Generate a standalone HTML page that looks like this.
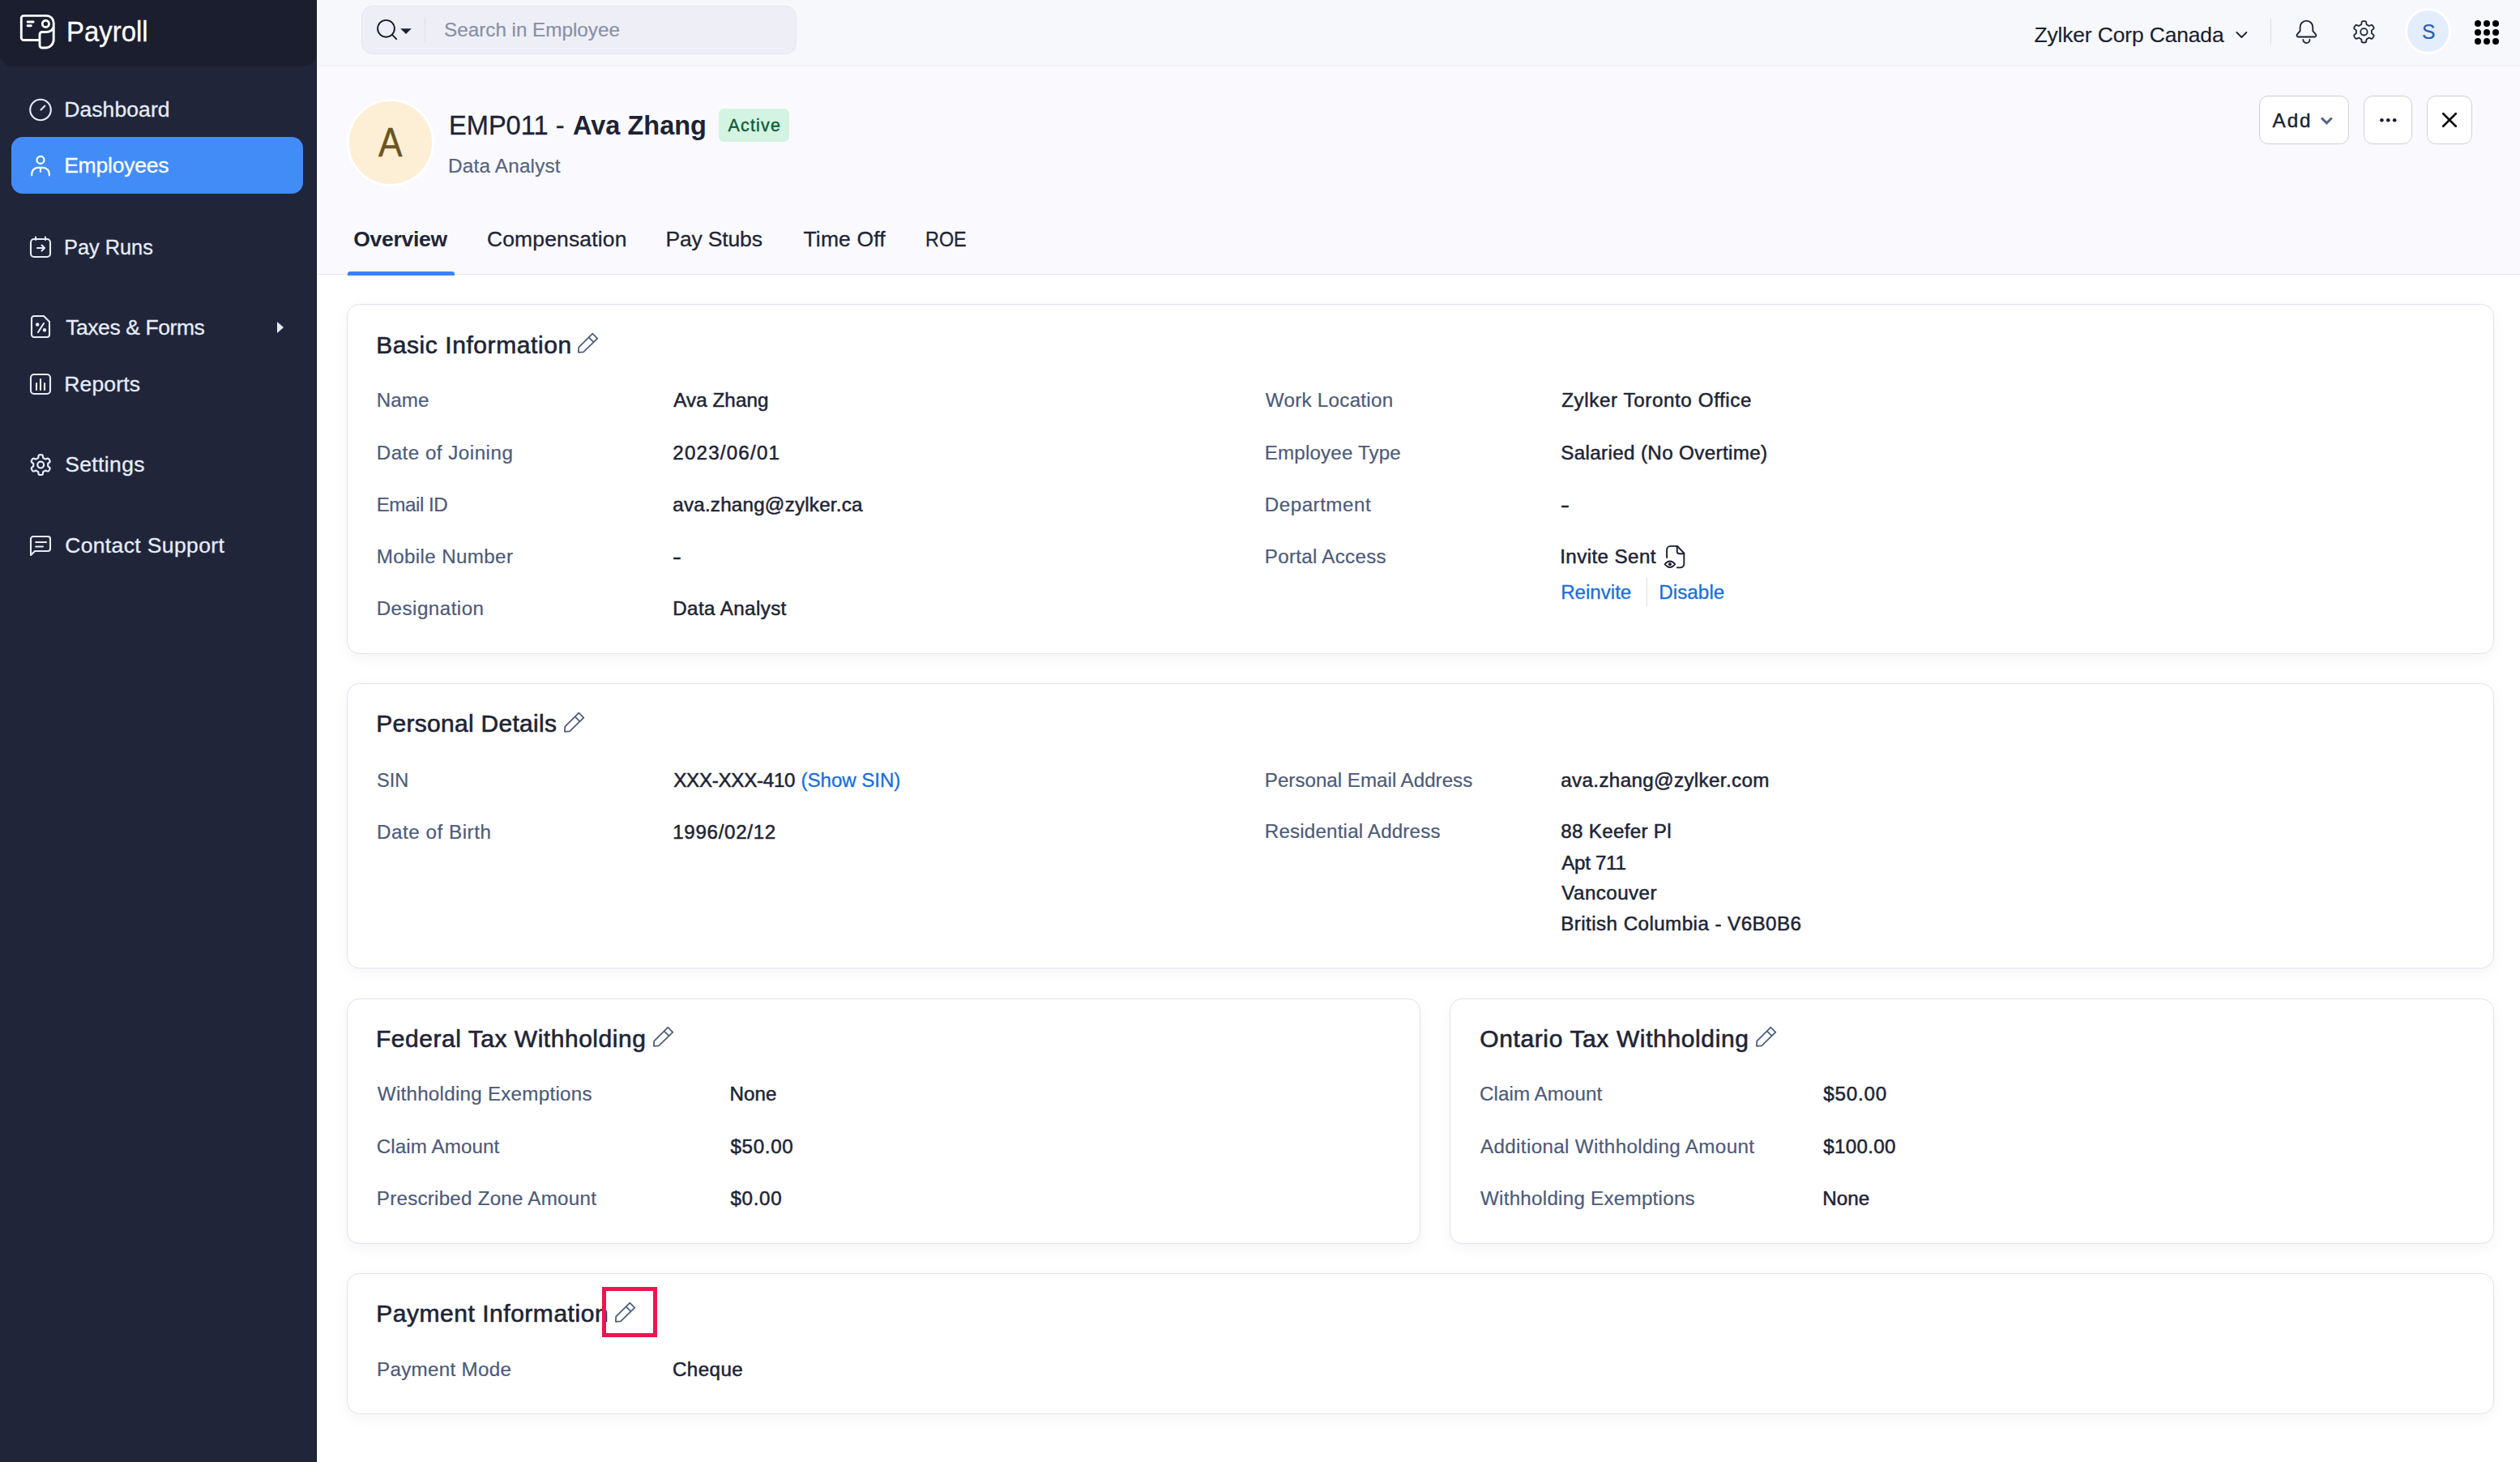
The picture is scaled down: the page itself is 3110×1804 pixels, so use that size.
<!DOCTYPE html>
<html><head><meta charset="utf-8"><title>Payroll - Employee</title>
<style>
html,body{margin:0;padding:0;width:3110px;height:1804px;overflow:hidden;background:#fafafd;}
body{position:relative;font-family:"Liberation Sans",sans-serif;}
.t{position:absolute;line-height:1;white-space:nowrap;}
.r{position:absolute;}
</style></head><body>
<div class="r" style="left:0px;top:0px;width:391px;height:1804px;background:#20253a;"></div>
<div class="r" style="left:390px;top:0px;width:1px;height:1804px;background:#131831;"></div>
<div class="r" style="left:0px;top:0px;width:390px;height:82px;background:#1a1e2f;border-radius:0 0 15px 15px;"></div>
<svg class="r" style="left:0px;top:0px" width="90" height="80" viewBox="0 0 90 80" fill="none" stroke="#fff" stroke-width="2.9" stroke-linecap="round" stroke-linejoin="round">
<path d="M49 49.5 H29.5 a3 3 0 0 1 -3.2 -3 V22.5 a3 3 0 0 1 3 -3.1 H57.5 a8.7 8.7 0 0 1 8.7 8.7 V49 a10 10 0 0 1 -10 10 H52 a3 3 0 0 1 -3 -3 V42.5 a3 3 0 0 1 3 -3 H57 Q64 39.5 66.2 33"/>
<path d="M34.1 27 H41.1 M34.1 31.8 H38.3"/><circle cx="56.4" cy="29.4" r="4.1"/></svg>
<div class="t" style="left:82.03px;top:21.65px;font-size:34.5px;color:#ffffff;transform:scaleX(0.9541);transform-origin:0 0;-webkit-text-stroke:0.3px #ffffff;">Payroll</div>
<div class="r" style="left:14px;top:169px;width:360px;height:70px;background:#428cf7;border-radius:14px;"></div>
<div class="t" style="left:79.15px;top:122.01px;font-size:26.5px;color:#e6ecf8;letter-spacing:0.100px;-webkit-text-stroke:0.3px #e6ecf8;">Dashboard</div>
<div class="t" style="left:79.15px;top:190.51px;font-size:26.5px;color:#ffffff;letter-spacing:-0.205px;-webkit-text-stroke:0.3px #ffffff;">Employees</div>
<div class="t" style="left:79.23px;top:291.51px;font-size:26.5px;color:#e6ecf8;transform:scaleX(0.9563);transform-origin:0 0;-webkit-text-stroke:0.3px #e6ecf8;">Pay Runs</div>
<div class="t" style="left:81.15px;top:390.61px;font-size:26.5px;color:#e6ecf8;letter-spacing:-0.421px;-webkit-text-stroke:0.3px #e6ecf8;">Taxes &amp; Forms</div>
<div class="t" style="left:79.15px;top:460.51px;font-size:26.5px;color:#e6ecf8;letter-spacing:0.194px;-webkit-text-stroke:0.3px #e6ecf8;">Reports</div>
<div class="t" style="left:80.15px;top:560.01px;font-size:26.5px;color:#e6ecf8;letter-spacing:0.371px;-webkit-text-stroke:0.3px #e6ecf8;">Settings</div>
<div class="t" style="left:80.15px;top:659.71px;font-size:26.5px;color:#e6ecf8;letter-spacing:0.368px;-webkit-text-stroke:0.3px #e6ecf8;">Contact Support</div>
<svg class="r" style="left:34px;top:119px" width="32" height="32" viewBox="0 0 32 32" fill="none" stroke="#e6ecf8" stroke-width="2.1" stroke-linecap="round" stroke-linejoin="round"><circle cx="16" cy="16.5" r="12.8"/><path d="M16.5 16.5 L21.3 11.7"/></svg>
<svg class="r" style="left:34px;top:186px" width="32" height="32" viewBox="0 0 32 32" fill="none" stroke="#fff" stroke-width="2.2" stroke-linecap="round"><circle cx="16" cy="11.4" r="4.5"/><path d="M5.2 30.3 V28.5 a7.6 7.6 0 0 1 7.6 -7.6 H19.2 a7.6 7.6 0 0 1 7.6 7.6 V30.3 M16 21 V25.8"/></svg>
<svg class="r" style="left:34px;top:289px" width="32" height="32" viewBox="0 0 32 32" fill="none" stroke="#e6ecf8" stroke-width="2.1" stroke-linecap="round" stroke-linejoin="round"><rect x="4" y="6" width="24" height="22" rx="4"/><path d="M10 3.5 V7 M22 3.5 V7 M12 17 H21 M17.5 13.5 L21 17 L17.5 20.5"/></svg>
<svg class="r" style="left:34px;top:387px" width="32" height="32" viewBox="0 0 32 32" fill="none" stroke="#e6ecf8" stroke-width="2.1" stroke-linecap="round" stroke-linejoin="round"><path d="M8 3 H20 L27 10 V26 a3 3 0 0 1 -3 3 H8 a3 3 0 0 1 -3 -3 V6 a3 3 0 0 1 3 -3 Z"/><path d="M13 23 L20 12"/><circle cx="12.2" cy="13.6" r="1.2" fill="#e6ecf8"/><circle cx="21" cy="20.2" r="1.2" fill="#e6ecf8"/></svg>
<svg class="r" style="left:34px;top:458px" width="32" height="32" viewBox="0 0 32 32" fill="none" stroke="#e6ecf8" stroke-width="2.1" stroke-linecap="round" stroke-linejoin="round"><rect x="4" y="4" width="24" height="24" rx="4"/><path d="M11 15 V23 M16 10 V23 M21 15 V23"/></svg>
<svg class="r" style="left:25px;top:550px" width="50" height="50" viewBox="25 550 50 50" fill="none" stroke="#e6ecf8" stroke-width="2.2" stroke-linejoin="round"><path d="M50.20 561.20 L50.74 561.21 L51.28 561.26 L51.81 561.35 L52.33 561.54 L52.76 562.07 L52.97 563.26 L53.08 564.46 L53.33 565.00 L53.66 565.25 L54.01 565.43 L54.36 565.62 L54.70 565.81 L55.04 566.01 L55.37 566.22 L55.70 566.43 L56.08 566.59 L56.68 566.53 L57.77 566.03 L58.91 565.62 L59.58 565.73 L60.01 566.08 L60.35 566.49 L60.66 566.94 L60.94 567.40 L61.20 567.88 L61.43 568.36 L61.62 568.87 L61.71 569.41 L61.46 570.05 L60.54 570.83 L59.56 571.52 L59.21 572.01 L59.16 572.42 L59.18 572.81 L59.19 573.21 L59.20 573.60 L59.19 573.99 L59.18 574.39 L59.16 574.78 L59.21 575.19 L59.56 575.68 L60.54 576.37 L61.46 577.15 L61.71 577.79 L61.62 578.33 L61.43 578.84 L61.20 579.32 L60.94 579.80 L60.66 580.26 L60.35 580.71 L60.01 581.12 L59.58 581.47 L58.91 581.58 L57.77 581.17 L56.68 580.67 L56.08 580.61 L55.70 580.77 L55.37 580.98 L55.04 581.19 L54.70 581.39 L54.36 581.58 L54.01 581.77 L53.66 581.95 L53.33 582.20 L53.08 582.74 L52.97 583.94 L52.76 585.13 L52.33 585.66 L51.81 585.85 L51.28 585.94 L50.74 585.99 L50.20 586.00 L49.66 585.99 L49.12 585.94 L48.59 585.85 L48.07 585.66 L47.64 585.13 L47.43 583.94 L47.32 582.74 L47.07 582.20 L46.74 581.95 L46.39 581.77 L46.04 581.58 L45.70 581.39 L45.36 581.19 L45.03 580.98 L44.70 580.77 L44.32 580.61 L43.72 580.67 L42.63 581.17 L41.49 581.58 L40.82 581.47 L40.39 581.12 L40.05 580.71 L39.74 580.26 L39.46 579.80 L39.20 579.32 L38.97 578.84 L38.78 578.33 L38.69 577.79 L38.94 577.15 L39.86 576.37 L40.84 575.68 L41.19 575.19 L41.24 574.78 L41.22 574.39 L41.21 573.99 L41.20 573.60 L41.21 573.21 L41.22 572.81 L41.24 572.42 L41.19 572.01 L40.84 571.52 L39.86 570.83 L38.94 570.05 L38.69 569.41 L38.78 568.87 L38.97 568.36 L39.20 567.88 L39.46 567.40 L39.74 566.94 L40.05 566.49 L40.39 566.08 L40.82 565.73 L41.49 565.62 L42.63 566.03 L43.72 566.53 L44.32 566.59 L44.70 566.43 L45.03 566.22 L45.36 566.01 L45.70 565.81 L46.04 565.62 L46.39 565.43 L46.74 565.25 L47.07 565.00 L47.32 564.46 L47.43 563.26 L47.64 562.07 L48.07 561.54 L48.59 561.35 L49.12 561.26 L49.66 561.21 Z"/><circle cx="50.2" cy="573.6" r="3.9"/></svg>
<svg class="r" style="left:34px;top:657px" width="32" height="32" viewBox="0 0 32 32" fill="none" stroke="#e6ecf8" stroke-width="2.1" stroke-linecap="round" stroke-linejoin="round"><path d="M4 28 V8 a3 3 0 0 1 3 -3 H25 a3 3 0 0 1 3 3 V20 a3 3 0 0 1 -3 3 H9 Z"/><path d="M10.2 12 H23 M10.2 17.5 H19"/></svg>
<svg class="r" style="left:340px;top:396px" width="12" height="16" viewBox="0 0 12 16"><path d="M2 1 L10 8 L2 15 Z" fill="#e4ebf7"/></svg>
<div class="r" style="left:391px;top:0px;width:2719px;height:81px;background:#f6f8fc;"></div>
<div class="r" style="left:391px;top:81px;width:2719px;height:1px;background:#eeeeef;"></div>
<div class="r" style="left:391px;top:82px;width:2719px;height:257px;background:#fafafe;"></div>
<div class="r" style="left:391px;top:339px;width:2719px;height:1465px;background:#ffffff;"></div>
<div class="r" style="left:391px;top:82px;width:1px;height:1722px;background:#f1f1f3;"></div>
<div class="r" style="left:446px;top:7px;width:537px;height:60px;background:#eeeff6;border:1px solid #e3e5ee;border-radius:14px;box-sizing:border-box;"></div>
<svg class="r" style="left:455px;top:15px" width="60" height="40" viewBox="455 15 60 40" fill="none" stroke="#161b2b" stroke-width="1.9" stroke-linecap="round"><circle cx="476.5" cy="35.3" r="10.4"/><path d="M484.2 43.2 L489.2 48.2"/><path d="M494.2 35.2 H507.8 L501 41.9 Z" fill="#1c2235" stroke="none"/></svg>
<div class="r" style="left:524px;top:22px;width:1px;height:30px;background:#dcdfe8;"></div>
<div class="t" style="left:548.10px;top:24.67px;font-size:24.3px;color:#8790a8;letter-spacing:-0.037px;-webkit-text-stroke:0.2px #8790a8;">Search in Employee</div>
<div class="t" style="left:2510.38px;top:30.41px;font-size:26.5px;color:#1a1f2e;letter-spacing:-0.167px;-webkit-text-stroke:0.15px #1a1f2e;">Zylker Corp Canada</div>
<svg class="r" style="left:2750px;top:30px" width="30" height="24" viewBox="2750 30 30 24" fill="none" stroke="#1a1f2e" stroke-width="1.8" stroke-linecap="round" stroke-linejoin="round"><path d="M2760.4 40 L2766.4 46 L2772.4 40"/></svg>
<div class="r" style="left:2802px;top:23px;width:1px;height:32px;background:#dcdfe8;"></div>
<svg class="r" style="left:2825px;top:15px" width="45" height="50" viewBox="2825 15 45 50" fill="none" stroke="#1a1f2e" stroke-width="1.8" stroke-linecap="round" stroke-linejoin="round"><path d="M2838.6 38.2 V33.55 a7.85 7.85 0 0 1 15.7 0 V38.2 L2857.9 42.3 a1.9 1.9 0 0 1 -1.4 3.2 H2836.4 a1.9 1.9 0 0 1 -1.4 -3.2 Z"/><path d="M2842.4 49 a4.05 4.05 0 0 0 8.1 0"/></svg>
<svg class="r" style="left:2895px;top:15px" width="45" height="50" viewBox="2895 15 45 50" fill="none" stroke="#1f2536" stroke-width="1.8" stroke-linejoin="round"><path d="M2917.40 26.10 L2917.98 26.11 L2918.55 26.16 L2919.12 26.26 L2919.66 26.47 L2920.12 27.04 L2920.34 28.34 L2920.45 29.63 L2920.71 30.22 L2921.05 30.48 L2921.42 30.68 L2921.79 30.87 L2922.15 31.07 L2922.51 31.29 L2922.86 31.51 L2923.21 31.73 L2923.61 31.89 L2924.25 31.82 L2925.43 31.27 L2926.66 30.81 L2927.38 30.92 L2927.84 31.29 L2928.20 31.74 L2928.53 32.21 L2928.83 32.70 L2929.11 33.21 L2929.35 33.73 L2929.56 34.27 L2929.65 34.84 L2929.38 35.52 L2928.36 36.36 L2927.30 37.11 L2926.92 37.62 L2926.86 38.05 L2926.88 38.47 L2926.89 38.89 L2926.90 39.30 L2926.89 39.71 L2926.88 40.13 L2926.86 40.55 L2926.92 40.98 L2927.30 41.49 L2928.36 42.24 L2929.38 43.08 L2929.65 43.76 L2929.56 44.33 L2929.35 44.87 L2929.11 45.39 L2928.83 45.90 L2928.53 46.39 L2928.20 46.86 L2927.84 47.31 L2927.38 47.68 L2926.66 47.79 L2925.43 47.33 L2924.25 46.78 L2923.61 46.71 L2923.21 46.87 L2922.86 47.09 L2922.51 47.31 L2922.15 47.53 L2921.79 47.73 L2921.42 47.92 L2921.05 48.12 L2920.71 48.38 L2920.45 48.97 L2920.34 50.26 L2920.12 51.56 L2919.66 52.13 L2919.12 52.34 L2918.55 52.44 L2917.98 52.49 L2917.40 52.50 L2916.82 52.49 L2916.25 52.44 L2915.68 52.34 L2915.14 52.13 L2914.68 51.56 L2914.46 50.26 L2914.35 48.97 L2914.09 48.38 L2913.75 48.12 L2913.38 47.92 L2913.01 47.73 L2912.65 47.53 L2912.29 47.31 L2911.94 47.09 L2911.59 46.87 L2911.19 46.71 L2910.55 46.78 L2909.37 47.33 L2908.14 47.79 L2907.42 47.68 L2906.96 47.31 L2906.60 46.86 L2906.27 46.39 L2905.97 45.90 L2905.69 45.39 L2905.45 44.87 L2905.24 44.33 L2905.15 43.76 L2905.42 43.08 L2906.44 42.24 L2907.50 41.49 L2907.88 40.98 L2907.94 40.55 L2907.92 40.13 L2907.91 39.71 L2907.90 39.30 L2907.91 38.89 L2907.92 38.47 L2907.94 38.05 L2907.88 37.62 L2907.50 37.11 L2906.44 36.36 L2905.42 35.52 L2905.15 34.84 L2905.24 34.27 L2905.45 33.73 L2905.69 33.21 L2905.97 32.70 L2906.27 32.21 L2906.60 31.74 L2906.96 31.29 L2907.42 30.92 L2908.14 30.81 L2909.37 31.27 L2910.55 31.82 L2911.19 31.89 L2911.59 31.73 L2911.94 31.51 L2912.29 31.29 L2912.65 31.07 L2913.01 30.87 L2913.38 30.68 L2913.75 30.48 L2914.09 30.22 L2914.35 29.63 L2914.46 28.34 L2914.68 27.04 L2915.14 26.47 L2915.68 26.26 L2916.25 26.16 L2916.82 26.11 Z"/><circle cx="2917.4" cy="39.3" r="4.2"/></svg>
<div class="r" style="left:2968px;top:10px;width:57px;height:57px;background:#e4edfb;border:3px solid #ffffff;border-radius:50%;box-sizing:border-box;"></div>
<div class="t" style="left:2988.61px;top:27.07px;font-size:25px;color:#2a5db0;transform:scaleX(0.9868);transform-origin:0 0;-webkit-text-stroke:0.2px #2a5db0;">S</div>
<svg class="r" style="left:3054px;top:25px" width="30" height="30" viewBox="0 0 30 30" fill="#000"><circle cx="4" cy="4" r="4"/><circle cx="4" cy="15" r="4"/><circle cx="4" cy="26" r="4"/><circle cx="15" cy="4" r="4"/><circle cx="15" cy="15" r="4"/><circle cx="15" cy="26" r="4"/><circle cx="26" cy="4" r="4"/><circle cx="26" cy="15" r="4"/><circle cx="26" cy="26" r="4"/></svg>
<div class="r" style="left:428px;top:122px;width:108px;height:108px;background:#fdefd5;border:3px solid #ffffff;border-radius:50%;box-sizing:border-box;"></div>
<div class="t" style="left:466.98px;top:151.15px;font-size:50px;color:#6b5420;transform:scaleX(0.8837);transform-origin:0 0;-webkit-text-stroke:0.4px #6b5420;">A</div>
<div class="t" style="left:553.50px;top:138.39px;font-size:33.5px;color:#1d2333;transform:scaleX(0.9728);transform-origin:0 0;-webkit-text-stroke:0.3px #1d2333;">EMP011 -</div>
<div class="t" style="left:707.00px;top:138.39px;font-size:33.5px;color:#1d2333;transform:scaleX(0.9701);transform-origin:0 0;font-weight:700;">Ava Zhang</div>
<div class="r" style="left:887px;top:134px;width:87px;height:41px;background:#d3f3e3;border-radius:6.5px;"></div>
<div class="t" style="left:898.47px;top:144.53px;font-size:21.5px;color:#0f5a37;letter-spacing:1.192px;-webkit-text-stroke:0.35px #0f5a37;">Active</div>
<div class="t" style="left:553.10px;top:192.87px;font-size:24.3px;color:#56637f;letter-spacing:0.191px;-webkit-text-stroke:0.2px #56637f;">Data Analyst</div>
<div class="r" style="left:2788px;top:118px;width:111px;height:60px;background:#fff;border:1px solid #d0d0d6;border-radius:11px;box-sizing:border-box;"></div>
<div class="t" style="left:2804.60px;top:136.87px;font-size:24.3px;color:#1a1f2e;letter-spacing:1.841px;-webkit-text-stroke:0.4px #1a1f2e;">Add</div>
<svg class="r" style="left:2860px;top:140px" width="24" height="18" viewBox="2860 140 24 18" fill="none" stroke="#56638a" stroke-width="3" stroke-linecap="butt" stroke-linejoin="miter"><path d="M2865 145.5 L2871.4 151.9 L2877.8 145.5"/></svg>
<div class="r" style="left:2917px;top:118px;width:60px;height:60px;background:#fff;border:1px solid #d0d0d6;border-radius:11px;box-sizing:border-box;"></div>
<svg class="r" style="left:2930px;top:140px" width="34" height="16" viewBox="2930 140 34 16" fill="#1a1f2e"><circle cx="2939.4" cy="148.3" r="2.3"/><circle cx="2947.3" cy="148.3" r="2.3"/><circle cx="2955.2" cy="148.3" r="2.3"/></svg>
<div class="r" style="left:2995px;top:118px;width:56px;height:60px;background:#fff;border:1px solid #d0d0d6;border-radius:11px;box-sizing:border-box;"></div>
<svg class="r" style="left:3011px;top:136px" width="24" height="24" viewBox="0 0 24 24" fill="none" stroke="#111" stroke-width="2.7" stroke-linecap="round"><path d="M4.2 4.2 L19.8 19.8 M19.8 4.2 L4.2 19.8"/></svg>
<div class="t" style="left:436.20px;top:282.01px;font-size:26.5px;color:#1f2536;font-weight:700;letter-spacing:-0.263px;">Overview</div>
<div class="t" style="left:600.95px;top:282.01px;font-size:26.5px;color:#1f2536;letter-spacing:0.142px;-webkit-text-stroke:0.3px #1f2536;">Compensation</div>
<div class="t" style="left:821.55px;top:282.01px;font-size:26.5px;color:#1f2536;letter-spacing:-0.180px;-webkit-text-stroke:0.3px #1f2536;">Pay Stubs</div>
<div class="t" style="left:991.55px;top:282.01px;font-size:26.5px;color:#1f2536;letter-spacing:0.120px;-webkit-text-stroke:0.3px #1f2536;">Time Off</div>
<div class="t" style="left:1141.57px;top:282.01px;font-size:26.5px;color:#1f2536;transform:scaleX(0.8828);transform-origin:0 0;-webkit-text-stroke:0.3px #1f2536;">ROE</div>
<div class="r" style="left:391px;top:338px;width:2719px;height:1px;background:#e4e6ee;"></div>
<div class="r" style="left:429px;top:335px;width:132px;height:5px;background:#3b82f6;border-radius:3px 3px 0 0;"></div>
<div class="r" style="left:428px;top:375px;width:2650px;height:432px;background:#fff;border:1px solid #e2e1f0;border-radius:15.5px;box-sizing:border-box;box-shadow:0 5px 18px rgba(0,0,0,0.045);"></div>
<div class="t" style="left:464.20px;top:410.55px;font-size:30px;color:#1e2434;letter-spacing:0.570px;-webkit-text-stroke:0.6px #1e2434;">Basic Information</div>
<svg class="r" style="left:704.95px;top:400.05px" width="40" height="45" viewBox="0 0 40 45" fill="none" stroke="#4f5c7c" stroke-width="1.75" stroke-linejoin="round"><path d="M9.2 28.6 L26.3 11.7 L32.3 17.7 L15.1 34.4 L8.9 34.8 Z M22 16.6 L28 22.6"/></svg>
<div class="t" style="left:464.70px;top:482.15px;font-size:24.2px;color:#4d5a78;letter-spacing:0.044px;-webkit-text-stroke:0.2px #4d5a78;">Name</div>
<div class="t" style="left:831.25px;top:482.15px;font-size:24.2px;color:#1e2434;letter-spacing:0.076px;-webkit-text-stroke:0.5px #1e2434;">Ava Zhang</div>
<div class="t" style="left:464.70px;top:546.55px;font-size:24.2px;color:#4d5a78;letter-spacing:0.486px;-webkit-text-stroke:0.2px #4d5a78;">Date of Joining</div>
<div class="t" style="left:830.25px;top:546.55px;font-size:24.2px;color:#1e2434;letter-spacing:1.188px;-webkit-text-stroke:0.5px #1e2434;">2023/06/01</div>
<div class="t" style="left:464.70px;top:610.65px;font-size:24.2px;color:#4d5a78;letter-spacing:-0.474px;-webkit-text-stroke:0.2px #4d5a78;">Email ID</div>
<div class="t" style="left:830.25px;top:610.65px;font-size:24.2px;color:#1e2434;letter-spacing:0.222px;-webkit-text-stroke:0.5px #1e2434;">ava.zhang@zylker.ca</div>
<div class="t" style="left:464.70px;top:674.95px;font-size:24.2px;color:#4d5a78;letter-spacing:0.355px;-webkit-text-stroke:0.2px #4d5a78;">Mobile Number</div>
<div class="t" style="left:829.98px;top:674.95px;font-size:24.2px;color:#1e2434;transform:scaleX(1.3538);transform-origin:0 0;-webkit-text-stroke:0.5px #1e2434;">-</div>
<div class="t" style="left:464.70px;top:739.25px;font-size:24.2px;color:#4d5a78;letter-spacing:0.461px;-webkit-text-stroke:0.2px #4d5a78;">Designation</div>
<div class="t" style="left:830.25px;top:739.25px;font-size:24.2px;color:#1e2434;letter-spacing:0.390px;-webkit-text-stroke:0.5px #1e2434;">Data Analyst</div>
<div class="t" style="left:1561.80px;top:482.15px;font-size:24.2px;color:#4d5a78;letter-spacing:0.266px;-webkit-text-stroke:0.2px #4d5a78;">Work Location</div>
<div class="t" style="left:1927.25px;top:482.15px;font-size:24.2px;color:#1e2434;letter-spacing:0.598px;-webkit-text-stroke:0.5px #1e2434;">Zylker Toronto Office</div>
<div class="t" style="left:1560.80px;top:546.55px;font-size:24.2px;color:#4d5a78;letter-spacing:0.145px;-webkit-text-stroke:0.2px #4d5a78;">Employee Type</div>
<div class="t" style="left:1926.25px;top:546.55px;font-size:24.2px;color:#1e2434;letter-spacing:0.359px;-webkit-text-stroke:0.5px #1e2434;">Salaried (No Overtime)</div>
<div class="t" style="left:1560.80px;top:610.65px;font-size:24.2px;color:#4d5a78;letter-spacing:0.494px;-webkit-text-stroke:0.2px #4d5a78;">Department</div>
<div class="t" style="left:1925.98px;top:610.65px;font-size:24.2px;color:#1e2434;transform:scaleX(1.3538);transform-origin:0 0;-webkit-text-stroke:0.5px #1e2434;">-</div>
<div class="t" style="left:1560.80px;top:674.95px;font-size:24.2px;color:#4d5a78;letter-spacing:0.277px;-webkit-text-stroke:0.2px #4d5a78;">Portal Access</div>
<div class="t" style="left:1925.25px;top:674.95px;font-size:24.2px;color:#1e2434;letter-spacing:0.393px;-webkit-text-stroke:0.5px #1e2434;">Invite Sent</div>
<svg class="r" style="left:2040px;top:660px" width="50" height="50" viewBox="2040 660 50 50" fill="none" stroke="#1a1f2e" stroke-width="1.9" stroke-linecap="round" stroke-linejoin="round"><path d="M2057.1 688 V678.35 a4.5 4.5 0 0 1 4.5 -4.5 H2070 L2078.3 682.5 V695.85 a4.5 4.5 0 0 1 -4.5 4.5 H2069.75"/><path d="M2069.75 673.85 V680.25 a3 3 0 0 0 3 3 H2078.3"/><path d="M2054.6 696.25 Q2060.9 688.6 2067.2 696.25 Q2060.9 703.9 2054.6 696.25 Z"/><circle cx="2060.9" cy="696.25" r="1.1" fill="#1a1f2e"/></svg>
<div class="t" style="left:1926.15px;top:718.55px;font-size:24.2px;color:#1a6ddb;letter-spacing:-0.033px;-webkit-text-stroke:0.3px #1a6ddb;">Reinvite</div>
<div class="r" style="left:2032px;top:712px;width:1px;height:37px;background:#dfe2ea;"></div>
<div class="t" style="left:2047.15px;top:718.55px;font-size:24.2px;color:#1a6ddb;letter-spacing:0.081px;-webkit-text-stroke:0.3px #1a6ddb;">Disable</div>
<div class="r" style="left:428px;top:843px;width:2650px;height:352px;background:#fff;border:1px solid #e2e1f0;border-radius:15.5px;box-sizing:border-box;box-shadow:0 5px 18px rgba(0,0,0,0.045);"></div>
<div class="t" style="left:464.30px;top:878.05px;font-size:30px;color:#1e2434;letter-spacing:0.278px;-webkit-text-stroke:0.6px #1e2434;">Personal Details</div>
<svg class="r" style="left:687.95px;top:867.55px" width="40" height="45" viewBox="0 0 40 45" fill="none" stroke="#4f5c7c" stroke-width="1.75" stroke-linejoin="round"><path d="M9.2 28.6 L26.3 11.7 L32.3 17.7 L15.1 34.4 L8.9 34.8 Z M22 16.6 L28 22.6"/></svg>
<div class="t" style="left:465.12px;top:950.65px;font-size:24.2px;color:#4d5a78;transform:scaleX(0.9723);transform-origin:0 0;-webkit-text-stroke:0.2px #4d5a78;">SIN</div>
<div class="t" style="left:831.25px;top:950.65px;font-size:24.2px;color:#1e2434;letter-spacing:-0.301px;-webkit-text-stroke:0.5px #1e2434;">XXX-XXX-410</div>
<div class="t" style="left:988.55px;top:950.65px;font-size:24.2px;color:#1a6ddb;letter-spacing:-0.089px;-webkit-text-stroke:0.3px #1a6ddb;">(Show SIN)</div>
<div class="t" style="left:465.10px;top:1014.75px;font-size:24.2px;color:#4d5a78;letter-spacing:0.526px;-webkit-text-stroke:0.2px #4d5a78;">Date of Birth</div>
<div class="t" style="left:830.25px;top:1014.75px;font-size:24.2px;color:#1e2434;letter-spacing:0.655px;-webkit-text-stroke:0.5px #1e2434;">1996/02/12</div>
<div class="t" style="left:1560.80px;top:950.75px;font-size:24.2px;color:#4d5a78;letter-spacing:-0.015px;-webkit-text-stroke:0.2px #4d5a78;">Personal Email Address</div>
<div class="t" style="left:1926.25px;top:950.75px;font-size:24.2px;color:#1e2434;letter-spacing:0.354px;-webkit-text-stroke:0.5px #1e2434;">ava.zhang@zylker.com</div>
<div class="t" style="left:1560.80px;top:1014.35px;font-size:24.2px;color:#4d5a78;letter-spacing:0.166px;-webkit-text-stroke:0.2px #4d5a78;">Residential Address</div>
<div class="t" style="left:1926.25px;top:1014.35px;font-size:24.2px;color:#1e2434;letter-spacing:0.287px;-webkit-text-stroke:0.5px #1e2434;">88 Keefer Pl</div>
<div class="t" style="left:1927.25px;top:1052.75px;font-size:24.2px;color:#1e2434;letter-spacing:-0.322px;-webkit-text-stroke:0.5px #1e2434;">Apt 711</div>
<div class="t" style="left:1927.25px;top:1090.25px;font-size:24.2px;color:#1e2434;letter-spacing:0.427px;-webkit-text-stroke:0.5px #1e2434;">Vancouver</div>
<div class="t" style="left:1926.25px;top:1127.75px;font-size:24.2px;color:#1e2434;letter-spacing:0.434px;-webkit-text-stroke:0.5px #1e2434;">British Columbia - V6B0B6</div>
<div class="r" style="left:428px;top:1232px;width:1325px;height:303px;background:#fff;border:1px solid #e2e1f0;border-radius:15.5px;box-sizing:border-box;box-shadow:0 5px 18px rgba(0,0,0,0.045);"></div>
<div class="t" style="left:464.00px;top:1266.75px;font-size:30px;color:#1e2434;letter-spacing:0.525px;-webkit-text-stroke:0.6px #1e2434;">Federal Tax Withholding</div>
<svg class="r" style="left:797.95px;top:1256.25px" width="40" height="45" viewBox="0 0 40 45" fill="none" stroke="#4f5c7c" stroke-width="1.75" stroke-linejoin="round"><path d="M9.2 28.6 L26.3 11.7 L32.3 17.7 L15.1 34.4 L8.9 34.8 Z M22 16.6 L28 22.6"/></svg>
<div class="t" style="left:465.80px;top:1338.25px;font-size:24.2px;color:#4d5a78;letter-spacing:0.249px;-webkit-text-stroke:0.2px #4d5a78;">Withholding Exemptions</div>
<div class="t" style="left:900.45px;top:1338.25px;font-size:24.2px;color:#1e2434;letter-spacing:0.076px;-webkit-text-stroke:0.5px #1e2434;">None</div>
<div class="t" style="left:464.80px;top:1402.55px;font-size:24.2px;color:#4d5a78;letter-spacing:0.084px;-webkit-text-stroke:0.2px #4d5a78;">Claim Amount</div>
<div class="t" style="left:901.45px;top:1402.55px;font-size:24.2px;color:#1e2434;letter-spacing:0.674px;-webkit-text-stroke:0.5px #1e2434;">$50.00</div>
<div class="t" style="left:464.80px;top:1466.85px;font-size:24.2px;color:#4d5a78;letter-spacing:0.232px;-webkit-text-stroke:0.2px #4d5a78;">Prescribed Zone Amount</div>
<div class="t" style="left:901.45px;top:1466.85px;font-size:24.2px;color:#1e2434;letter-spacing:0.681px;-webkit-text-stroke:0.5px #1e2434;">$0.00</div>
<div class="r" style="left:1789px;top:1232px;width:1289px;height:303px;background:#fff;border:1px solid #e2e1f0;border-radius:15.5px;box-sizing:border-box;box-shadow:0 5px 18px rgba(0,0,0,0.045);"></div>
<div class="t" style="left:1826.20px;top:1266.75px;font-size:30px;color:#1e2434;letter-spacing:0.627px;-webkit-text-stroke:0.6px #1e2434;">Ontario Tax Withholding</div>
<svg class="r" style="left:2158.65px;top:1256.25px" width="40" height="45" viewBox="0 0 40 45" fill="none" stroke="#4f5c7c" stroke-width="1.75" stroke-linejoin="round"><path d="M9.2 28.6 L26.3 11.7 L32.3 17.7 L15.1 34.4 L8.9 34.8 Z M22 16.6 L28 22.6"/></svg>
<div class="t" style="left:1826.00px;top:1338.25px;font-size:24.2px;color:#4d5a78;letter-spacing:0.066px;-webkit-text-stroke:0.2px #4d5a78;">Claim Amount</div>
<div class="t" style="left:2250.25px;top:1338.25px;font-size:24.2px;color:#1e2434;letter-spacing:0.794px;-webkit-text-stroke:0.5px #1e2434;">$50.00</div>
<div class="t" style="left:1827.00px;top:1402.55px;font-size:24.2px;color:#4d5a78;letter-spacing:0.354px;-webkit-text-stroke:0.2px #4d5a78;">Additional Withholding Amount</div>
<div class="t" style="left:2250.25px;top:1402.55px;font-size:24.2px;color:#1e2434;letter-spacing:0.303px;-webkit-text-stroke:0.5px #1e2434;">$100.00</div>
<div class="t" style="left:1827.00px;top:1466.85px;font-size:24.2px;color:#4d5a78;letter-spacing:0.249px;-webkit-text-stroke:0.2px #4d5a78;">Withholding Exemptions</div>
<div class="t" style="left:2249.25px;top:1466.85px;font-size:24.2px;color:#1e2434;letter-spacing:0.043px;-webkit-text-stroke:0.5px #1e2434;">None</div>
<div class="r" style="left:428px;top:1571px;width:2650px;height:174px;background:#fff;border:1px solid #e2e1f0;border-radius:15.5px;box-sizing:border-box;box-shadow:0 5px 18px rgba(0,0,0,0.045);"></div>
<div class="t" style="left:464.20px;top:1606.05px;font-size:30px;color:#1e2434;letter-spacing:0.533px;-webkit-text-stroke:0.6px #1e2434;">Payment Information</div>
<svg class="r" style="left:751.45px;top:1595.55px" width="40" height="45" viewBox="0 0 40 45" fill="none" stroke="#4f5c7c" stroke-width="1.75" stroke-linejoin="round"><path d="M9.2 28.6 L26.3 11.7 L32.3 17.7 L15.1 34.4 L8.9 34.8 Z M22 16.6 L28 22.6"/></svg>
<div class="t" style="left:465.00px;top:1677.85px;font-size:24.2px;color:#4d5a78;letter-spacing:0.289px;-webkit-text-stroke:0.2px #4d5a78;">Payment Mode</div>
<div class="t" style="left:829.95px;top:1677.85px;font-size:24.2px;color:#1e2434;letter-spacing:0.405px;-webkit-text-stroke:0.5px #1e2434;">Cheque</div>
<div class="r" style="left:743px;top:1588px;width:68px;height:62px;border:5px solid #f0134e;box-sizing:border-box;"></div>
</body></html>
